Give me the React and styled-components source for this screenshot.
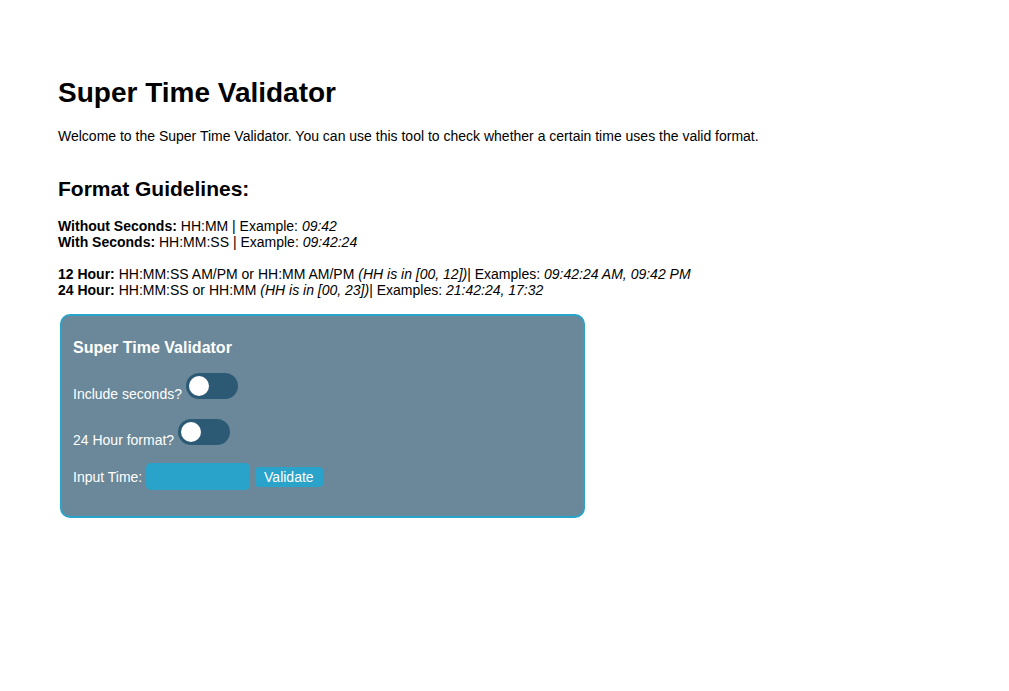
import { useState } from 'react';
import styled, { createGlobalStyle } from 'styled-components';

const GlobalStyle = createGlobalStyle`
  body {
    margin: 0;
    background: #ffffff;
    font-family: "Liberation Sans", Arial, sans-serif;
    color: #000;
  }
`;

const Page = styled.div`
  padding: 77px 58px 40px;
  font-size: 14px;
  line-height: 16px;
`;

const Title = styled.h1`
  margin: 0;
  font-size: 28px;
  line-height: 32px;
  font-weight: bold;
`;

const Intro = styled.p`
  margin: 19px 0 0;
`;

const SubTitle = styled.h2`
  margin: 33px 0 0;
  font-size: 21px;
  line-height: 24px;
  font-weight: bold;
`;

const Guide = styled.div`
  margin-top: ${p => p.$top}px;
`;

const Card = styled.div`
  width: 499px;
  margin: 16px 0 0 2px;
  padding: 23px 11px 26px;
  background: #6a8899;
  border: 2px solid #2aa3c9;
  border-radius: 10px;
  color: #fff;
`;

const CardTitle = styled.h3`
  margin: 0;
  font-size: 16px;
  line-height: 18px;
  font-weight: bold;
`;

const Row = styled.div`
  margin-top: ${p => p.$top}px;
  line-height: 16px;
`;

const Switch = styled.span`
  display: inline-block;
  position: relative;
  width: 52px;
  height: 26px;
  border-radius: 13px;
  background: ${p => (p.$on ? '#2aa3c9' : '#2c5a75')};
  cursor: pointer;
  transition: background 0.2s;

  &::before {
    content: "";
    position: absolute;
    top: 3px;
    left: ${p => (p.$on ? '29px' : '3px')};
    width: 20px;
    height: 20px;
    border-radius: 50%;
    background: #fff;
    transition: left 0.2s;
  }
`;

const TimeInput = styled.input`
  box-sizing: border-box;
  width: 104px;
  height: 27px;
  border: none;
  border-radius: 5px;
  background: #29a3c9;
  color: #fff;
  font: 14px "Liberation Sans", Arial, sans-serif;
  padding: 0 6px;
  outline: none;
`;

const Button = styled.button`
  margin-left: 1px;
  border: none;
  border-radius: 4px;
  background: #29a3c9;
  color: #fff;
  font: 14px/16px "Liberation Sans", Arial, sans-serif;
  padding: 2px 9px;
  cursor: pointer;
`;

function Toggle({ label, top }) {
  const [on, setOn] = useState(false);
  return (
    <Row $top={top}>
      {label} <Switch $on={on} onClick={() => setOn(v => !v)} />
    </Row>
  );
}

export default function App() {
  const [value, setValue] = useState('');
  return (
    <>
      <GlobalStyle />
      <Page>
        <Title>Super Time Validator</Title>
        <Intro>
          Welcome to the Super Time Validator. You can use this tool to check whether a certain time uses the valid format.
        </Intro>
        <SubTitle>Format Guidelines:</SubTitle>
        <Guide $top={17}>
          <b>Without Seconds:</b> HH:MM | Example: <i>09:42</i>
          <br />
          <b>With Seconds:</b> HH:MM:SS | Example: <i>09:42:24</i>
        </Guide>
        <Guide $top={16}>
          <b>12 Hour:</b> HH:MM:SS AM/PM or HH:MM AM/PM <i>(HH is in [00, 12])</i>| Examples: <i>09:42:24 AM, 09:42 PM</i>
          <br />
          <b>24 Hour:</b> HH:MM:SS or HH:MM <i>(HH is in [00, 23])</i>| Examples: <i>21:42:24, 17:32</i>
        </Guide>
        <Card>
          <CardTitle>Super Time Validator</CardTitle>
          <Toggle label="Include seconds?" top={16} />
          <Toggle label="24 Hour format?" top={17} />
          <Row $top={15}>
            Input Time: <TimeInput value={value} onChange={e => setValue(e.target.value)} /> <Button>Validate</Button>
          </Row>
        </Card>
      </Page>
    </>
  );
}
